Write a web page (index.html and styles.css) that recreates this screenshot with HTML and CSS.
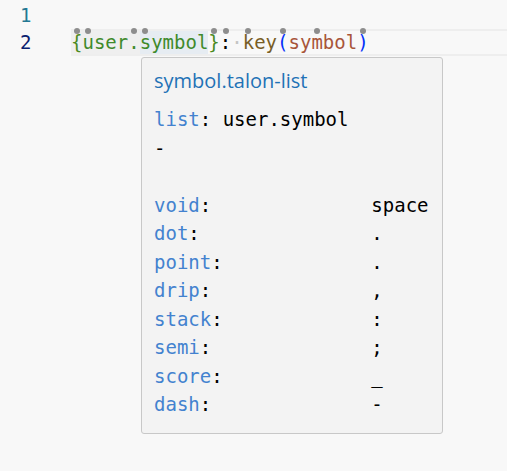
FILE: index.html
```html
<!DOCTYPE html>
<html>
<head>
<meta charset="utf-8">
<link rel="stylesheet" href="styles.css">
</head>
<body>
<div class="editor">
  <div class="line">
    <div class="gutter num">1</div>
    <div class="code"></div>
  </div>
  <div class="line current">
    <div class="gutter num active">2</div>
    <div class="code"><span class="hl-gray"><span class="tk-brace h">{</span><span class="tk-var h">u</span><span class="tk-var">ser</span><span class="tk-var h">.</span></span><span class="hl-blue"><span class="tk-var h">s</span><span class="tk-var">ymbol</span></span><span class="tk-brace h">}</span><span class="tk-punc h">:</span><span class="ws">·</span><span class="tk-fn h">k</span><span class="tk-fn">ey</span><span class="tk-paren h">(</span><span class="tk-arg">sy</span><span class="tk-arg h">m</span><span class="tk-arg">bol</span><span class="tk-paren h">)</span></div>
  </div>

  <div class="hover">
    <div class="hover-title">symbol.talon-list</div>
    <pre class="hover-body"><span class="key">list</span>: user.symbol
-

<span class="key">void</span>:              space
<span class="key">dot</span>:               .
<span class="key">point</span>:             .
<span class="key">drip</span>:              ,
<span class="key">stack</span>:             :
<span class="key">semi</span>:              ;
<span class="key">score</span>:             _
<span class="key">dash</span>:              -</pre>
  </div>
</div>
</body>
</html>
```

FILE: styles.css
```css
html, body {
  margin: 0;
  padding: 0;
  background: #f8f8f8;
}

body {
  width: 507px;
  height: 471px;
  overflow: hidden;
}

.editor {
  position: relative;
  padding-top: 2px;
  font-family: "DejaVu Sans Mono", "Liberation Mono", monospace;
  font-size: 19px;
}

.line {
  display: flex;
  height: 27px;
}

.gutter {
  width: 71px;
  flex: none;
  box-sizing: border-box;
  padding-left: 20px;
  line-height: 27px;
  color: #237893;
}

.gutter.active {
  color: #0b216f;
}

.code {
  flex: 1;
  line-height: 27px;
  white-space: pre;
  color: #000;
}

.line.current .code {
  border-top: 2px solid #eeeeee;
  border-bottom: 2px solid #eeeeee;
  line-height: 23px;
}

.hl-gray {
  display: inline-block;
  background: #efefef;
}

.hl-blue {
  display: inline-block;
  background: #e6ecf2;
}

.tk-brace { color: #4a8a22; }
.tk-var { color: #3f8a2c; }
.tk-punc { color: #000000; }
.tk-fn { color: #795e26; }
.tk-paren { color: #0431fa; }
.tk-arg { color: #a8553a; }
.ws { color: #c4c4c4; }

.h {
  position: relative;
}

.h::after {
  content: "";
  position: absolute;
  left: 50%;
  top: -3px;
  width: 6px;
  height: 6px;
  margin-left: -3px;
  border-radius: 50%;
  background: #8d8d8d;
}

.hover {
  position: absolute;
  left: 141px;
  top: 57px;
  width: 302px;
  height: 377px;
  box-sizing: border-box;
  background: #f3f3f3;
  border: 1px solid #c8c8c8;
  border-radius: 3px;
  padding: 9px 12px 0 12px;
}

.hover-title {
  font-family: "Open Sans", "Noto Sans", sans-serif;
  font-size: 20px;
  line-height: 28px;
  color: #1f72b6;
}

.hover-body {
  margin: 10px 0 0 0;
  font-family: "DejaVu Sans Mono", "Liberation Mono", monospace;
  font-size: 19px;
  line-height: 28.5px;
  color: #000;
}

.key {
  color: #4382cf;
}
```
